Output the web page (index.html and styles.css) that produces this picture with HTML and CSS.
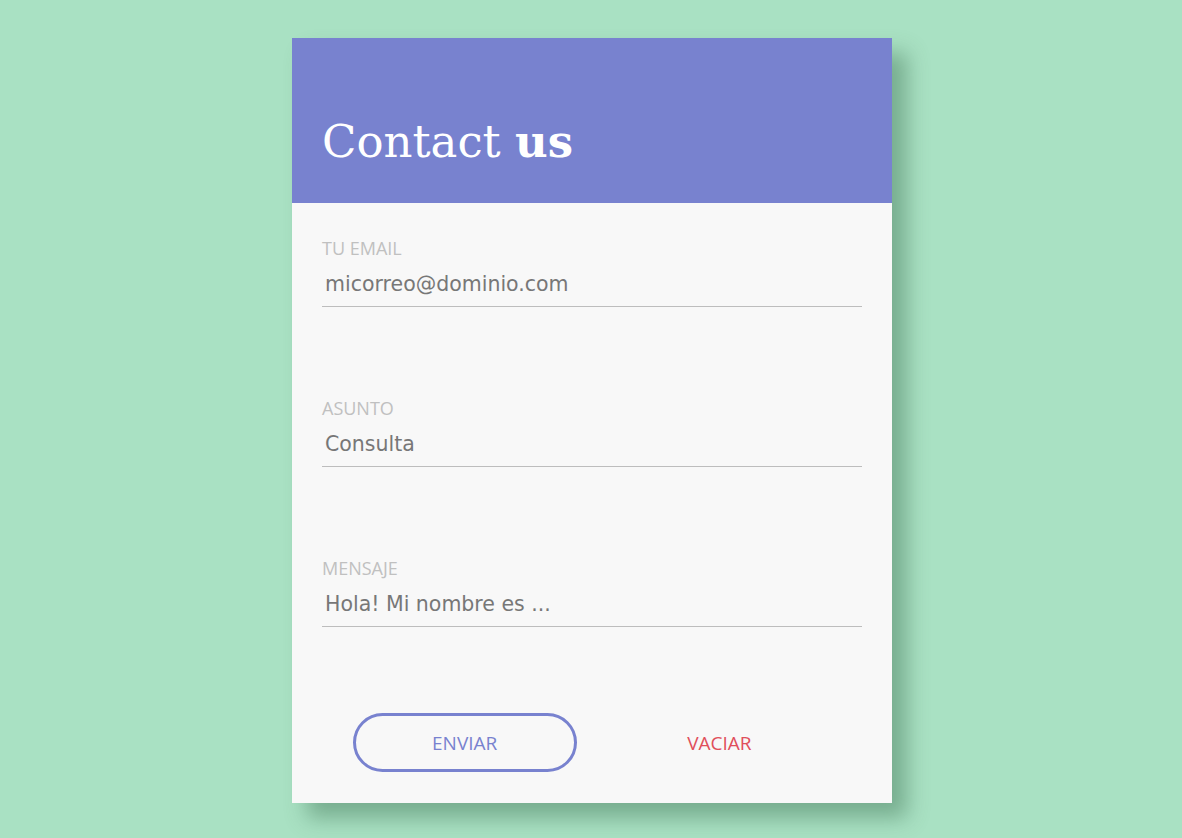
FILE: index.html
```html
<!DOCTYPE html>
<html lang="es">
<head>
<meta charset="utf-8">
<title>Contact us</title>
<link rel="stylesheet" href="styles.css">
</head>
<body>
<div class="card">
  <header class="card-header">
    <h1 class="title">Contact <strong>us</strong></h1>
  </header>
  <form class="form">
    <div class="field">
      <label class="label">TU EMAIL</label>
      <input class="input" type="text" value="micorreo@dominio.com">
    </div>
    <div class="field">
      <label class="label">ASUNTO</label>
      <input class="input" type="text" value="Consulta">
    </div>
    <div class="field">
      <label class="label">MENSAJE</label>
      <input class="input" type="text" value="Hola! Mi nombre es ...">
    </div>
    <div class="actions">
      <button type="button" class="btn btn-send">ENVIAR</button>
      <button type="button" class="btn btn-clear">VACIAR</button>
    </div>
  </form>
</div>
</body>
</html>
```
FILE: styles.css
```css
html, body {
  margin: 0;
  padding: 0;
}
body {
  background: #a9e1c3;
  min-height: 838px;
  font-family: "DejaVu Sans", "Liberation Sans", sans-serif;
}
.card {
  width: 600px;
  margin: 38px auto 0;
  position: relative;
  left: 1px;
  background: #f8f8f8;
  box-shadow: 15px 15px 20px rgba(60, 110, 80, 0.45);
}
.card-header {
  background: #7882cf;
  height: 165px;
  box-sizing: border-box;
  padding: 74px 30px 0;
}
.title {
  margin: 0;
  font-family: "DejaVu Serif", "Liberation Serif", serif;
  font-weight: normal;
  font-size: 45px;
  line-height: 60px;
  color: #ffffff;
}
.title strong {
  font-weight: bold;
}
.form {
  padding: 34px 30px 31px;
}
.field {
  display: flex;
  flex-direction: column;
  margin-bottom: 90px;
}
.label {
  font-family: "Open Sans", "Liberation Sans", sans-serif;
  font-size: 18px;
  line-height: 22px;
  color: #c0c0c0;
}
.input {
  margin-top: 6px;
  border: none;
  border-bottom: 1px solid #bdbdbd;
  background: transparent;
  padding: 6px 3px 9px;
  font-family: "DejaVu Sans", "Liberation Sans", sans-serif;
  font-size: 20.5px;
  line-height: 26px;
  color: #777777;
  outline: none;
}
.actions {
  display: flex;
  justify-content: space-evenly;
  margin-top: -4px;
}
.btn {
  width: 224px;
  height: 59px;
  box-sizing: border-box;
  border-radius: 30px;
  font-family: "Open Sans", "Liberation Sans", sans-serif;
  font-size: 19px;
  background: transparent;
  cursor: pointer;
}
.btn-send {
  border: 3px solid #7882cf;
  color: #7882cf;
}
.btn-clear {
  border: 3px solid transparent;
  color: #e04f5b;
}
```
